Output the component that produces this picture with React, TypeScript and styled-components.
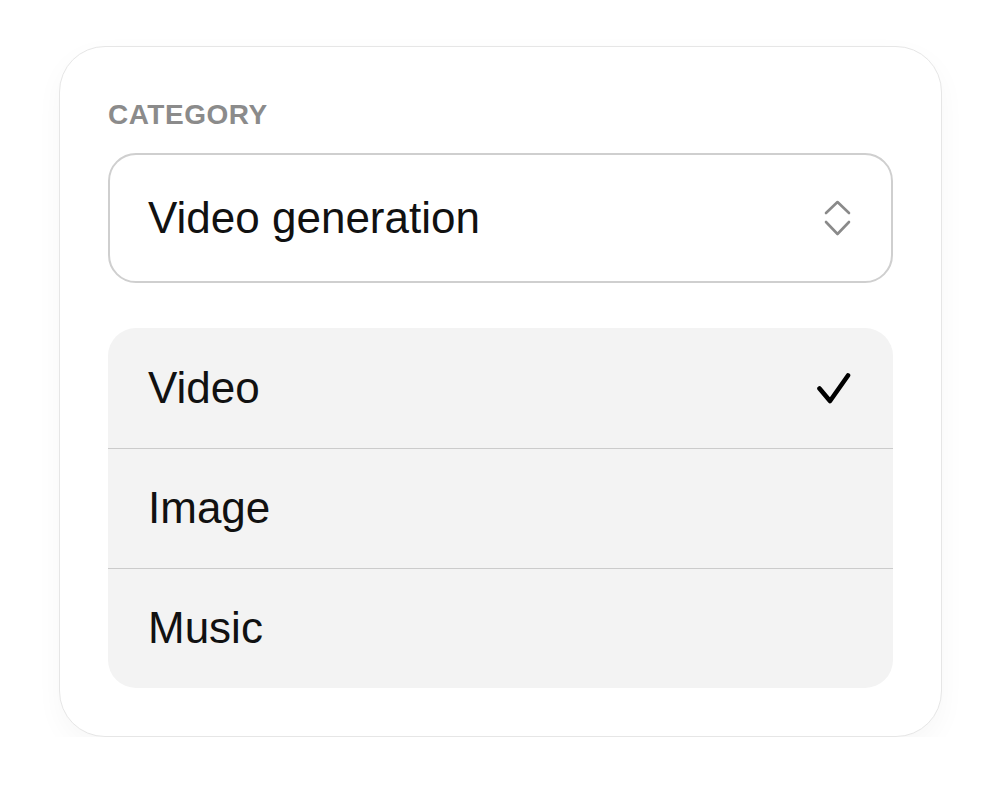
import styled, { createGlobalStyle } from 'styled-components';

const GlobalStyle = createGlobalStyle`
  html, body {
    margin: 0;
    padding: 0;
    background: #ffffff;
    font-family: "Liberation Sans", Arial, sans-serif;
  }
`;

const Page = styled.div`
  padding: 46px 0 0 59px;
`;

const Card = styled.div`
  width: 883px;
  box-sizing: border-box;
  padding: 53.5px 48px 48.5px 48px;
  background: #ffffff;
  border: 1.5px solid #e6e6e6;
  border-radius: 46px;
  box-shadow: 0 10px 28px rgba(0, 0, 0, 0.035);
`;

const Label = styled.div`
  font-size: 28px;
  line-height: 28px;
  font-weight: 700;
  letter-spacing: 0.5px;
  color: #8b8b8b;
  margin-bottom: 24px;
`;

const Select = styled.div`
  height: 130px;
  box-sizing: border-box;
  border: 2px solid #cfcfcf;
  border-radius: 28px;
  display: flex;
  align-items: center;
  justify-content: space-between;
  padding: 0 38px 0 38px;
  font-size: 44px;
  color: #111111;
`;

const List = styled.div`
  margin-top: 45px;
  background: #f3f3f3;
  border-radius: 28px;
  overflow: hidden;
`;

const Row = styled.div<{ $first?: boolean }>`
  height: 120px;
  box-sizing: border-box;
  display: flex;
  align-items: center;
  justify-content: space-between;
  padding: 0 42px 0 40px;
  font-size: 44px;
  color: #111111;
  border-top: ${(p) => (p.$first ? 'none' : '1px solid #cbcbcb')};
`;

const Chevrons = () => (
  <svg width="30" height="40" viewBox="0 0 30 40" fill="none">
    <path d="M3 15 L14.5 4 L26 15" stroke="#8a8a8a" strokeWidth="2.6" strokeLinecap="round" strokeLinejoin="round" />
    <path d="M3 24 L14.5 36 L26 24" stroke="#8a8a8a" strokeWidth="2.6" strokeLinecap="round" strokeLinejoin="round" />
  </svg>
);

const Check = () => (
  <svg width="36" height="36" viewBox="0 0 36 36" fill="none">
    <path d="M4.5 18.5 L15 31 L33 5.5" stroke="#000000" strokeWidth="4.6" strokeLinecap="round" strokeLinejoin="round" />
  </svg>
);

const options = ['Video', 'Image', 'Music'];

export default function App() {
  const selected = 'Video';
  return (
    <>
      <GlobalStyle />
      <Page>
        <Card>
          <Label>CATEGORY</Label>
          <Select>
            <span>Video generation</span>
            <Chevrons />
          </Select>
          <List>
            {options.map((o, i) => (
              <Row key={o} $first={i === 0}>
                <span>{o}</span>
                {o === selected && <Check />}
              </Row>
            ))}
          </List>
        </Card>
      </Page>
    </>
  );
}
